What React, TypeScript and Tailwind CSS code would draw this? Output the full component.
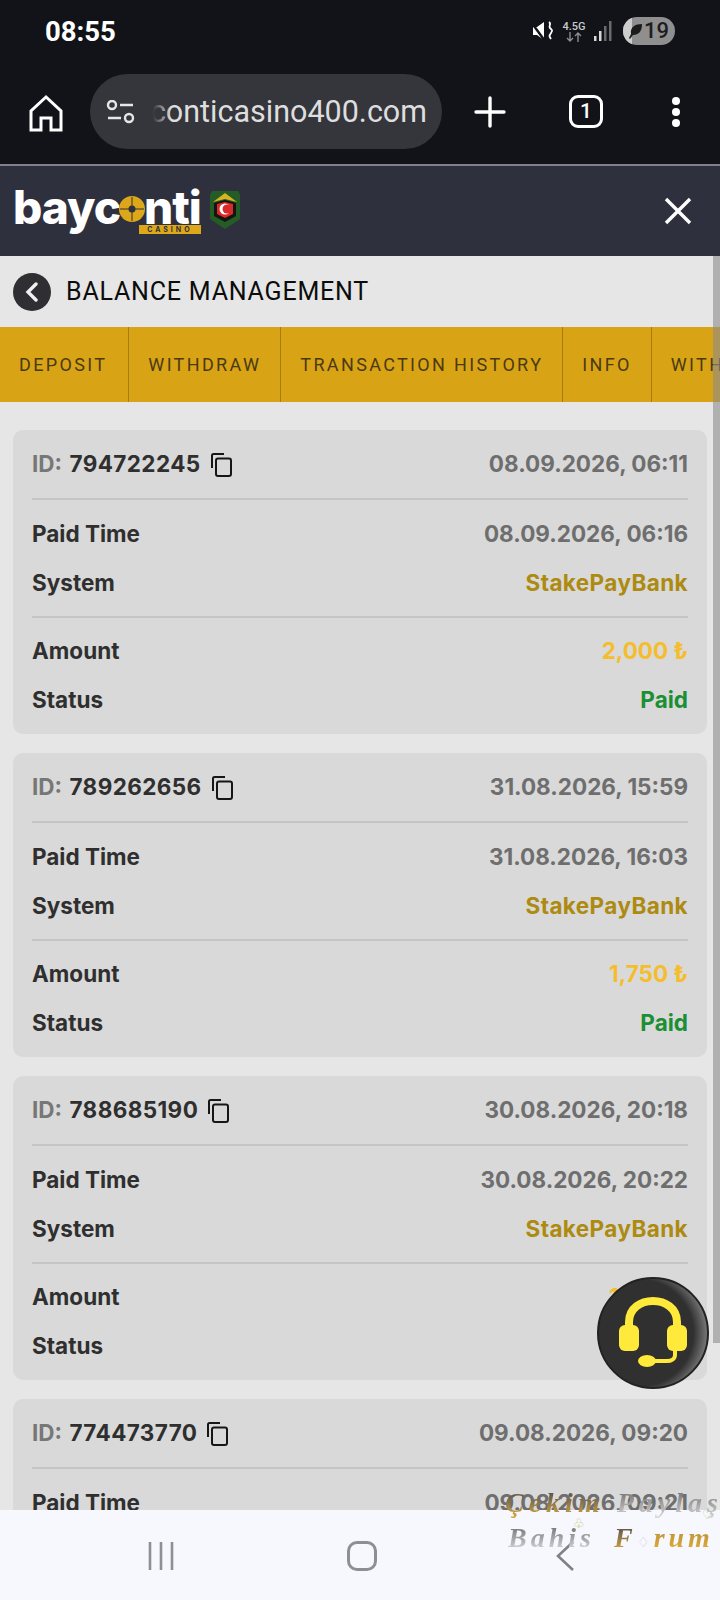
const transactions = [
  { id: "794722245", created: "08.09.2026, 06:11", paid: "08.09.2026, 06:16", amount: "2,000 ₺" },
  { id: "789262656", created: "31.08.2026, 15:59", paid: "31.08.2026, 16:03", amount: "1,750 ₺" },
  { id: "788685190", created: "30.08.2026, 20:18", paid: "30.08.2026, 20:22", amount: "1,750 ₺" },
  { id: "774473770", created: "09.08.2026, 09:20", paid: "09.08.2026, 09:21", amount: "1,000 ₺" },
];

const tabs = ["DEPOSIT", "WITHDRAW", "TRANSACTION HISTORY", "INFO", "WITHDRAW HISTORY"];

function CopyIcon() {
  return (
    <svg width="21" height="24" viewBox="0 0 21 24" fill="none" stroke="#161616" strokeWidth="2">
      <path d="M1 15V2.5A1.5 1.5 0 0 1 2.5 1H13" />
      <rect x="5" y="5.5" width="15" height="17.5" rx="2" />
    </svg>
  );
}

function StatusBar() {
  return (
    <div className="h-[74px] pl-[45px] pr-[45px] pt-[16px] flex justify-between items-start">
      <span className="text-[27.5px] leading-[32px] font-bold text-white font-['Roboto',sans-serif]">08:55</span>
      <div className="flex items-center h-[28px] mt-[1px]">
        <svg width="24" height="24" viewBox="0 0 24 24" fill="#fff">
          <path d="M2 8h4l7-5v18l-7-5H2z" />
          <path d="M0 3l14 19" stroke="#121319" strokeWidth="2.4" />
          <path d="M18 3c3 2-1 4 1 6s3 2 1 5-2 3 0 6" fill="none" stroke="#fff" strokeWidth="1.8" />
        </svg>
        <div className="ml-[6px] w-[26px] flex flex-col items-center text-[#c9c9c9] font-['Roboto',sans-serif]">
          <span className="text-[11px] leading-[11px] font-medium">4.5G</span>
          <svg width="18" height="10" viewBox="0 0 18 10" fill="none" stroke="#8b8b8b" strokeWidth="1.4">
            <path d="M5 0v9M2 6l3 3 3-3M13 10V1M10 4l3-3 3 3" />
          </svg>
        </div>
        <svg width="20" height="24" viewBox="0 0 20 24" className="ml-[6px]">
          <rect x="1" y="17" width="2.5" height="5" fill="#d8d8d8" />
          <rect x="6" y="12" width="2.5" height="10" fill="#d8d8d8" />
          <rect x="11" y="7" width="2.5" height="15" fill="#6a6a6a" />
          <rect x="16" y="2" width="2.5" height="20" fill="#6a6a6a" />
        </svg>
        <div className="ml-[10px] w-[52px] h-[28px] rounded-full bg-[#8f8f8f] overflow-hidden flex items-center relative">
          <div className="w-[9px] h-full bg-[#cdcdcd]" />
          <svg width="14" height="16" viewBox="0 0 14 16" className="absolute left-[6px] top-[6px]" fill="#1c1c1c">
            <path d="M13 1C6 1 1 4 2 11L0 15l1 1 3-4c6 0 9-4 9-11z" />
          </svg>
          <span className="absolute left-[21px] top-[2px] text-[22px] leading-[24px] font-medium text-[#1d1d1d] font-['Roboto',sans-serif]">19</span>
        </div>
      </div>
    </div>
  );
}

function BrowserBar() {
  return (
    <div className="h-[92px] flex items-start border-b-2 border-[#80808c]">
      <svg width="36" height="38" viewBox="0 0 36 38" fill="none" stroke="#fff" strokeWidth="3" className="ml-[28px] mt-[20px]">
        <path d="M18 3L3 17v19h10V24h10v12h10V17z" strokeLinejoin="miter" />
      </svg>
      <div className="ml-[26px] w-[352px] h-[75px] rounded-full bg-[#35353c] flex items-center relative">
        <svg width="30" height="24" viewBox="0 0 30 24" fill="none" stroke="#e6e6e6" strokeWidth="2.4" className="ml-[16px]">
          <circle cx="6" cy="5" r="4" />
          <path d="M14 5h13M2 18h13" />
          <circle cx="23" cy="18" r="4" />
        </svg>
        <div className="ml-[17px] w-[274px] overflow-hidden flex justify-end relative">
          <span className="text-[30.5px] leading-[36px] text-[#dedede] whitespace-nowrap font-['Roboto',sans-serif]">conticasino400.com</span>
          <div className="absolute left-0 top-0 h-full w-[18px] bg-gradient-to-r from-[#35353c] to-transparent" />
        </div>
      </div>
      <svg width="32" height="32" viewBox="0 0 32 32" stroke="#fff" strokeWidth="3.4" strokeLinecap="round" className="ml-[32px] mt-[22px]">
        <path d="M16 2v28M2 16h28" />
      </svg>
      <div className="ml-[63px] mt-[21px] w-[34px] h-[33px] rounded-[9px] border-[3px] border-white flex items-center justify-center text-white text-[21px] font-medium font-['Roboto',sans-serif]">
        1
      </div>
      <div className="ml-[69px] mt-[23px] flex flex-col gap-[3px]">
        <div className="w-[8px] h-[8px] rounded-full bg-white" />
        <div className="w-[8px] h-[8px] rounded-full bg-white" />
        <div className="w-[8px] h-[8px] rounded-full bg-white" />
      </div>
    </div>
  );
}

function Logo() {
  return (
    <div className="flex items-start">
      <div className="flex flex-col items-end">
        <div className="flex items-center h-[46px] text-white text-[46px] leading-[46px] font-extrabold tracking-[-1px] font-['Inter',sans-serif]">
          <span>bayc</span>
          <svg width="26" height="26" viewBox="0 0 26 26" className="mx-[-1px] mt-[4px]">
            <circle cx="13" cy="13" r="13" fill="#dca718" />
            <path d="M13 1v24M1 13h24" stroke="#2f303d" strokeWidth="1" />
            <circle cx="13" cy="13" r="3.5" fill="#2f303d" />
          </svg>
          <span>nti</span>
        </div>
        <div className="w-[62px] h-[9px] mt-[-5px] mb-[4px] bg-[#dca718] text-[#2f303d] text-[7px] leading-[9px] font-bold tracking-[3px] text-center font-['Inter',sans-serif]">
          CASINO
        </div>
      </div>
      <svg width="32" height="40" viewBox="0 0 32 40" className="ml-[8px] mt-[5px]">
        <path d="M3 2h26l2 4v24l-15 10L1 30V6z" fill="#245c26" />
        <path d="M16 4l12 9-12-3-12 3z" fill="#d8b21f" />
        <path d="M5 14l11-3 11 3v13l-11 6-11-6z" fill="#141414" />
        <path d="M8 15l8-2 8 2v10l-8 4-8-4z" fill="#d92a2a" />
        <circle cx="16" cy="20" r="5.5" fill="#fff" />
        <circle cx="18" cy="20" r="4.5" fill="#d92a2a" />
      </svg>
    </div>
  );
}

function Row({ label, value, valueClass }: { label: string; value: string; valueClass: string }) {
  return (
    <div className="flex justify-between items-center h-[49px]">
      <span className="text-[#2f2f2f]">{label}</span>
      <span className={valueClass}>{value}</span>
    </div>
  );
}

function TransactionCard({ tx }: { tx: (typeof transactions)[number] }) {
  return (
    <div className="mx-[13px] mb-[19px] px-[19px] rounded-[10px] bg-[#d9d9d9] text-[22.5px] font-bold font-['Inter',sans-serif]">
      <div className="h-[70px] flex justify-between items-center border-b-2 border-[#c5c5c5]">
        <div className="flex items-center">
          <span className="text-[#777777] mr-[2px]">ID:&nbsp;</span>
          <span className="text-[#2f2f2f] tracking-[0.4px]">{tx.id}</span>
          <span className="ml-[10px] mt-[1px]">
            <CopyIcon />
          </span>
        </div>
        <span className="text-[#6e6e6e]">{tx.created}</span>
      </div>
      <div className="py-[9px] border-b-2 border-[#c5c5c5]">
        <Row label="Paid Time" value={tx.paid} valueClass="text-[#6e6e6e]" />
        <Row label="System" value="StakePayBank" valueClass="text-[#ad8a10] tracking-[0.4px]" />
      </div>
      <div className="pt-[8px] pb-[10px]">
        <Row label="Amount" value={tx.amount} valueClass="text-[#f5bd2c]" />
        <Row label="Status" value="Paid" valueClass="text-[#1b8f33]" />
      </div>
    </div>
  );
}

function ChatButton() {
  return (
    <div className="absolute left-[597px] top-[1277px] w-[112px] h-[112px] rounded-full bg-[radial-gradient(circle_at_38%_50%,#303030_62%,#d8d8d8_100%)] flex items-center justify-center border-2 border-[#222]">
      <svg width="76" height="76" viewBox="0 0 76 76" fill="none">
        <path d="M14 38V27C14 13 26 6 38 6s24 7 24 21v11" stroke="#ffe93b" strokeWidth="8" />
        <rect x="4" y="30" width="20" height="26" rx="6" fill="#ffe93b" />
        <rect x="52" y="30" width="20" height="26" rx="6" fill="#ffe93b" />
        <path d="M60 56v4c0 4-4 6-8 6H38" stroke="#ffe93b" strokeWidth="4" />
        <ellipse cx="32" cy="66" rx="9" ry="6" fill="#ffe93b" />
      </svg>
    </div>
  );
}

function Watermark() {
  return (
    <div className="absolute left-[505px] top-[1487px] w-[215px] italic font-bold text-[28px] leading-[32px] whitespace-nowrap font-['Liberation_Serif',serif]">
      <div className="tracking-[5px]">
        <span className="bg-gradient-to-b from-[#444] to-[#d9a93a] bg-clip-text text-transparent">Çekim </span>
        <span className="bg-gradient-to-b from-[#666] to-[#d8d8dc] bg-clip-text text-transparent">Paylaş</span>
      </div>
      <div className="mt-[3px] pl-[3px] tracking-[4px]">
        <span className="bg-gradient-to-b from-[#666] to-[#e3e3e8] bg-clip-text text-transparent">Bahis </span>
        <span className="ml-[8px] bg-gradient-to-b from-[#444] to-[#e8ae32] bg-clip-text text-transparent">F</span>
        <span className="text-[#c9c9cf] not-italic font-normal text-[14px]">♢</span>
        <span className="bg-gradient-to-b from-[#a88a3c] to-[#e8ae32] bg-clip-text text-transparent">rum</span>
      </div>
      {/* suit marks sprinkled over the watermark */}
      <span className="absolute left-[68px] top-[30px] text-[#c8c36a] not-italic font-normal text-[13px] leading-[14px]">♧</span>
      <span className="absolute left-[197px] top-[21px] text-[#c8c36a] not-italic font-normal text-[12px] leading-[14px]">♡</span>
    </div>
  );
}

function NavBar() {
  return (
    <div className="absolute left-0 bottom-0 w-full h-[90px] bg-[#f6f8fe] flex items-start pt-[31px] pl-[148px]">
      <svg width="26" height="30" viewBox="0 0 26 30" stroke="#8c8f94" strokeWidth="2.6">
        <path d="M2 1v28M13 1v28M24 1v28" />
      </svg>
      <div className="ml-[173px] w-[30px] h-[30px] rounded-[10px] border-[3px] border-[#8c8f94]" />
      <svg width="20" height="30" viewBox="0 0 20 30" fill="none" stroke="#7e8186" strokeWidth="2.6" className="ml-[178px]">
        <path d="M18 1L3 15l15 14" />
      </svg>
    </div>
  );
}

export default function App() {
  return (
    <div className="relative w-[720px] h-[1600px] overflow-hidden bg-[#e6e6e6]">
      <div className="bg-[#121319]">
        <StatusBar />
        <BrowserBar />
      </div>
      <div className="h-[90px] bg-[#2f303d] flex items-center justify-between pl-[13px] pr-[28px]">
        <Logo />
        <svg width="28" height="28" viewBox="0 0 28 28" stroke="#fff" strokeWidth="3.4">
          <path d="M2 2l24 24M26 2L2 26" />
        </svg>
      </div>
      <div className="h-[71px] flex items-center pl-[13px]">
        <div className="w-[38px] h-[38px] rounded-full bg-[#2f2f33] flex items-center justify-center">
          <svg width="14" height="20" viewBox="0 0 14 20" fill="none" stroke="#f0f0f0" strokeWidth="3.4" strokeLinecap="round">
            <path d="M11 2L3 10l8 8" />
          </svg>
        </div>
        <span className="ml-[15px] text-[25px] tracking-[0.8px] text-[#0c0c0c] font-['Roboto',sans-serif]">BALANCE MANAGEMENT</span>
      </div>
      <div className="h-[75px] bg-[#d9a316] flex overflow-hidden">
        {tabs.map((tab, i) => (
          <div
            key={tab}
            className={
              i === 0
                ? "shrink-0 pl-[19px] pr-[21px] flex items-center border-r border-[#a97c10] text-[18px] tracking-[2.35px] text-[#4a3a12] whitespace-nowrap font-['Roboto',sans-serif]"
                : "shrink-0 px-[19px] flex items-center border-r border-[#a97c10] text-[18px] tracking-[2.35px] text-[#4a3a12] whitespace-nowrap font-['Roboto',sans-serif]"
            }
          >
            {tab}
          </div>
        ))}
      </div>
      <div className="pt-[28px]">
        {transactions.map((tx) => (
          <TransactionCard key={tx.id} tx={tx} />
        ))}
      </div>
      {/* scrollbar thumb */}
      <div className="absolute left-[713px] top-[256px] w-[7px] h-[1087px] bg-[#8c8c8c]/60" />
      <ChatButton />
      <NavBar />
      <Watermark />
    </div>
  );
}
